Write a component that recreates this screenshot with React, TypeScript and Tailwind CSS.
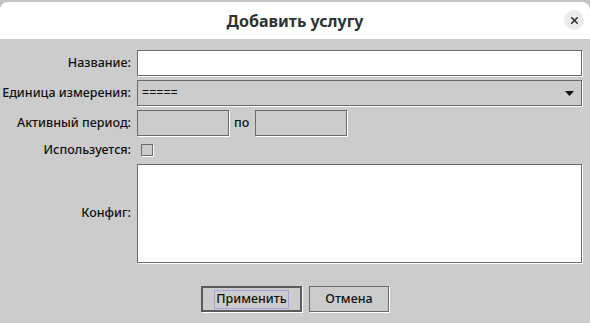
import { X } from "lucide-react";

const labelCls = "text-[12.5px] font-medium text-[#111111] text-right leading-none whitespace-nowrap";

const Field = ({ white, w }: { white?: boolean; w: string }) => (
  <div
    className={`${w} h-[26px] border border-[#6b6b6b] shadow-[1px_1px_0_#ffffff] ${
      white ? "bg-white" : "bg-[#cccccc]"
    }`}
  />
);

const App = () => {
  return (
    <div className="w-[590px] h-[323px] bg-[#c4c4c4] pt-[2px] overflow-hidden" style={{ fontFamily: '"Noto Sans", sans-serif' }}>
      <div className="h-[321px] bg-[#cccccc] rounded-t-[8px] overflow-hidden flex flex-col">
        {/* header */}
        <div className="h-[37px] bg-white flex items-center justify-center relative shrink-0">
          <span className="text-[16px] font-bold text-[#2e3436]">Добавить услугу</span>
          <button className="absolute right-[6px] top-[8px] w-[20px] h-[20px] rounded-full bg-[#ebebeb] flex items-center justify-center">
            <X size={11} strokeWidth={3.5} className="text-[#2e3436]" />
          </button>
        </div>

        {/* form */}
        <div className="grid grid-cols-[131px_446px] gap-x-[6px] gap-y-[4px] pt-[11px]">
          <div className={`${labelCls} self-center`}>Название:</div>
          <Field white w="w-[445px]" />

          <div className={`${labelCls} self-center`}>Единица измерения:</div>
          <div className="w-[445px] h-[26px] border border-[#6b6b6b] shadow-[1px_1px_0_#ffffff] flex items-center justify-between pl-[4px] pr-[7px]">
            <span className="text-[12.5px] font-medium text-[#111111] leading-none">=====</span>
            <svg width="9" height="5" viewBox="0 0 9 5">
              <path d="M0 0h9L4.5 5z" fill="#111" />
            </svg>
          </div>

          <div className={`${labelCls} self-center`}>Активный период:</div>
          <div className="flex items-center">
            <Field w="w-[92px]" />
            <span className="text-[12.5px] font-medium text-[#111111] leading-none ml-[5px] mr-[6px]">по</span>
            <Field w="w-[92px]" />
          </div>

          <div className={`${labelCls} self-center`}>Используется:</div>
          <div className="h-[20px] flex items-center pl-[4px]">
            <div className="w-[12px] h-[12px] border border-[#6b6b6b] shadow-[1px_1px_0_#ffffff]" />
          </div>

          <div className={`${labelCls} self-center`}>Конфиг:</div>
          <div className="w-[445px] h-[99px] bg-white border border-[#6b6b6b] shadow-[1px_1px_0_#ffffff]" />
        </div>

        {/* buttons */}
        <div className="flex justify-center gap-[7px] mt-[23px]">
          <button className="w-[101px] h-[26px] border-2 border-[#5a5a5a] shadow-[1px_1px_0_#ffffff] flex items-center justify-center">
            <span className="border border-[#a9a2e0] px-[1px] h-[19px] flex items-center text-[12.5px] font-medium text-[#111111]">
              Применить
            </span>
          </button>
          <button className="w-[80px] h-[26px] border border-[#6b6b6b] shadow-[1px_1px_0_#ffffff] flex items-center justify-center text-[12.5px] font-medium text-[#111111]">
            Отмена
          </button>
        </div>
      </div>
    </div>
  );
};

export default App;
